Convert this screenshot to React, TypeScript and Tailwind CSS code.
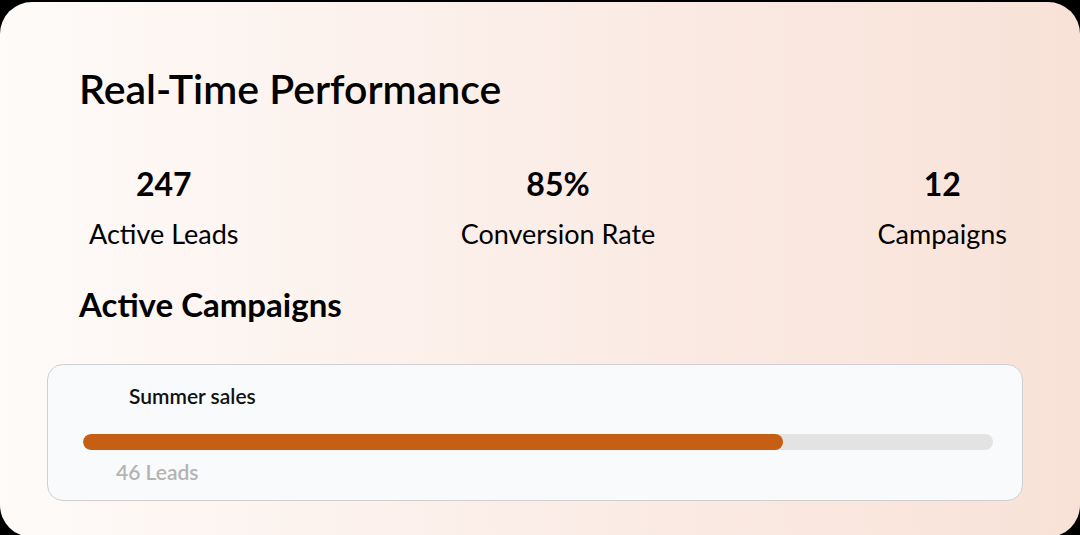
import React from "react";

export default function App() {
  const pct = (700 / 910) * 100;
  return (
    <div className="w-[1080px] h-[535px] bg-black overflow-hidden pt-[2px]" style={{ fontFamily: "Lato, 'Noto Sans', sans-serif" }}>
      <div className="h-[535px] rounded-[32px] bg-gradient-to-r from-[#fefbf9] via-[#fbede7] to-[#f8e2d8] pl-[47px] pr-[57px] pt-[63px] text-black">
        <h1 className="ml-[32px] text-[41px] leading-[48px] font-semibold">Real-Time Performance</h1>
        <div className="mt-[51px] ml-[42px] mr-[16px] flex justify-between">
          <div className="flex flex-col items-center">
            <div className="text-[32px] leading-[40px] font-bold">247</div>
            <div className="mt-[13px] text-[27px] leading-[34px] font-normal">Active Leads</div>
          </div>
          <div className="flex flex-col items-center">
            <div className="text-[32px] leading-[40px] font-bold">85%</div>
            <div className="mt-[13px] text-[27px] leading-[34px] font-normal">Conversion Rate</div>
          </div>
          <div className="flex flex-col items-center">
            <div className="text-[32px] leading-[40px] font-bold">12</div>
            <div className="mt-[13px] text-[27px] leading-[34px] font-normal">Campaigns</div>
          </div>
        </div>
        <h2 className="mt-[33px] ml-[32px] text-[33px] leading-[40px] font-bold">Active Campaigns</h2>
        <div className="mt-[40px] w-[976px] h-[137px] rounded-[16px] border border-[#cfcfd2] bg-[#f9fafb] pl-[35px] pr-[29px] pt-[18px]">
          <div className="ml-[46px] text-[21px] leading-[26px] font-semibold text-[#111]">Summer sales</div>
          <div className="mt-[25px] h-[16px] w-full rounded-full bg-[#e3e3e3] overflow-hidden">
            <div className="h-full rounded-full bg-[#c65e14]" style={{ width: `${pct}%` }} />
          </div>
          <div className="mt-[9px] ml-[33px] text-[21px] leading-[26px] font-semibold text-[#b3b3b3]">46 Leads</div>
        </div>
      </div>
    </div>
  );
}
